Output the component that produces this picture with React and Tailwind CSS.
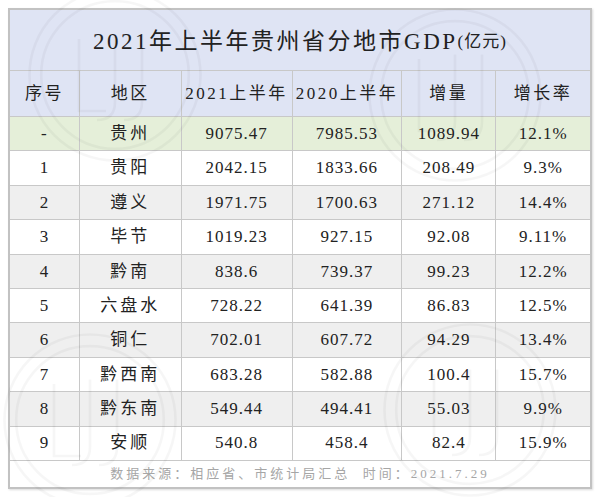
const rows = [
  ['-', '贵州', '9075.47', '7985.53', '1089.94', '12.1%'],
  ['1', '贵阳', '2042.15', '1833.66', '208.49', '9.3%'],
  ['2', '遵义', '1971.75', '1700.63', '271.12', '14.4%'],
  ['3', '毕节', '1019.23', '927.15', '92.08', '9.11%'],
  ['4', '黔南', '838.6', '739.37', '99.23', '12.2%'],
  ['5', '六盘水', '728.22', '641.39', '86.83', '12.5%'],
  ['6', '铜仁', '702.01', '607.72', '94.29', '13.4%'],
  ['7', '黔西南', '683.28', '582.88', '100.4', '15.7%'],
  ['8', '黔东南', '549.44', '494.41', '55.03', '9.9%'],
  ['9', '安顺', '540.8', '458.4', '82.4', '15.9%'],
];

const headers = ['序号', '地区', '2021上半年', '2020上半年', '增量', '增长率'];
const widths = ['w-[70px]', 'w-[102px]', 'w-[111px]', 'w-[110px]', 'w-[94px]', 'w-[94px]'];

const font = { fontFamily: '"Liberation Serif", "Noto Sans CJK SC", serif' };

// faint round stamp behind the table
function Watermark({ className }) {
  return (
    <svg className={className} viewBox="0 0 200 200" fill="none" stroke="#000" strokeOpacity="0.035" strokeWidth="3">
      <circle cx="100" cy="100" r="95" />
      <circle cx="100" cy="100" r="82" />
      <path d="M60 60 L60 140 L90 140 M100 55 L100 130 Q100 150 80 150 M130 55 L130 130 Q130 150 110 150" />
    </svg>
  );
}

export default function App() {
  return (
    <div className="relative h-[497px] w-[600px] overflow-hidden bg-white text-[#222]" style={font}>
      <div className="ml-[8px] mt-[8px] w-[584px] border-2 border-[#c2c2c2] shadow-[1px_1px_2px_rgba(0,0,0,0.15)]">
        <div className="flex h-[61px] items-center justify-center border-b border-[#c8c8c8] bg-[#dfe4f4] pt-[4px] text-[23px] tracking-[2.5px]">
          2021年上半年贵州省分地市GDP<span className="text-[17px] tracking-[1px]">(亿元)</span>
        </div>
        <div className="flex h-[46px] border-b border-[#c8c8c8] bg-[#dfe4f4] text-[17px] tracking-[2.5px]">
          {headers.map((h, i) => (
            <div
              key={h}
              className={`${widths[i]} flex items-center justify-center ${i < 5 ? 'border-r border-[#c8c8c8]' : ''}`}
            >
              {h}
            </div>
          ))}
        </div>
        {rows.map((r, ri) => (
          <div
            key={ri}
            className={`flex h-[34.4px] border-b border-[#c8c8c8] text-[17px] ${
              ri === 0 ? 'bg-[#e5efd9]' : ri % 2 === 0 ? 'bg-[#efefef]' : 'bg-white'
            }`}
          >
            {r.map((c, i) => (
              <div
                key={i}
                className={`${widths[i]} flex items-center justify-center ${i === 1 ? 'tracking-[3px]' : 'tracking-[1px]'} ${
                  i < 5 ? 'border-r border-[#c8c8c8]' : ''
                }`}
              >
                {c}
              </div>
            ))}
          </div>
        ))}
        <div className="flex h-[26px] items-center justify-center bg-white text-[13px] tracking-[3px] text-[#a6a6a6]">
          数据来源：相应省、市统计局汇总 &nbsp;时间：2021.7.29
        </div>
      </div>
      <Watermark className="pointer-events-none absolute left-[25px] top-[-15px] h-[180px] w-[180px]" />
      <Watermark className="pointer-events-none absolute left-[365px] top-[5px] h-[180px] w-[180px]" />
      <Watermark className="pointer-events-none absolute left-[0px] top-[330px] h-[180px] w-[180px]" />
      <Watermark className="pointer-events-none absolute left-[380px] top-[320px] h-[180px] w-[180px]" />
    </div>
  );
}
